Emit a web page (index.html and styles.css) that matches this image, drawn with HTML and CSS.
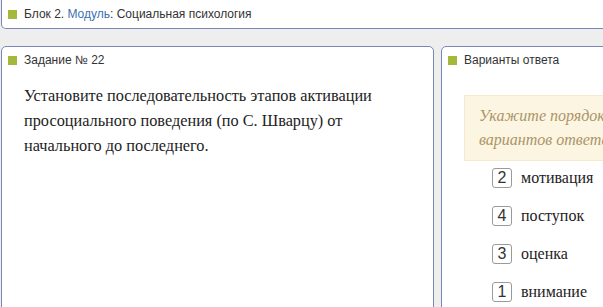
FILE: index.html
```html
<!DOCTYPE html>
<html lang="ru">
<head>
    <meta charset="UTF-8">
    <title>Задание № 22</title>
    <link rel="stylesheet" href="styles.css">
</head>
<body>
    <div class="topbar">
        <span class="mark"></span>
        <span>Блок 2. <a class="link">Модуль</a>: Социальная психология</span>
    </div>

    <div class="row">
        <div class="panel left">
            <div class="head"><span class="mark"></span>Задание № 22</div>
            <p class="question">Установите последовательность этапов активации просоциального поведения (по С. Шварцу) от начального до последнего.</p>
        </div>

        <div class="panel right">
            <div class="head"><span class="mark"></span>Варианты ответа</div>
            <div class="hint">Укажите порядок следования всех 4 вариантов ответа:</div>
            <ul class="answers">
                <li><span class="num">2</span>мотивация</li>
                <li><span class="num">4</span>поступок</li>
                <li><span class="num">3</span>оценка</li>
                <li><span class="num">1</span>внимание</li>
            </ul>
        </div>
    </div>
</body>
</html>
```

FILE: styles.css
```css
html {
    font-family: "Liberation Sans", Arial, sans-serif;
}

body {
    margin: 0;
    background-color: #eeeeee;
    overflow: hidden;
    width: 603px;
    height: 307px;
}

.mark {
    display: inline-block;
    width: 9px;
    height: 9px;
    background-color: #a3b93a;
    margin-right: 7px;
}

.topbar {
    display: flex;
    align-items: center;
    height: 28px;
    margin-left: 1px;
    margin-right: -20px;
    padding-left: 6px;
    background: white;
    border: 1px solid #7c86b6;
    border-top: none;
    border-radius: 0 0 5px 5px;
    font-size: 12px;
    color: #333;
}

.link {
    color: #3b72b0;
}

.row {
    display: flex;
    gap: 7px;
    margin-top: 17px;
    margin-left: 1px;
}

.panel {
    background: white;
    border: 1px solid #7c86b6;
    border-radius: 5px;
    height: 300px;
    flex-shrink: 0;
    box-sizing: border-box;
    padding: 6px 6px 0 6px;
}

.left {
    width: 433px;
}

.right {
    width: 480px;
}

.head {
    display: flex;
    align-items: center;
    font-size: 12px;
    color: #333;
    height: 14px;
}

.question {
    margin: 16px 0 0 16px;
    font-family: "Liberation Serif", "Times New Roman", serif;
    font-size: 16.3px;
    line-height: 25px;
    color: #222;
    width: 370px;
}

.hint {
    margin: 28px 0 0 16px;
    padding: 8px 14px 8px 14px;
    background: #fcf5e2;
    border: 1px solid #f3ead0;
    font-family: "Liberation Serif", "Times New Roman", serif;
    font-style: italic;
    font-size: 16px;
    line-height: 24px;
    color: #ab9468;
    width: 260px;
}

.answers {
    list-style: none;
    margin: -2px 0 0 44px;
    padding: 0;
}

.answers li {
    display: flex;
    align-items: center;
    height: 38px;
    font-family: "Liberation Serif", "Times New Roman", serif;
    font-size: 16px;
    color: #222;
}

.num {
    display: inline-flex;
    align-items: center;
    justify-content: center;
    width: 18px;
    height: 18px;
    border: 1px solid #9a9a9a;
    border-radius: 3px;
    margin-right: 9px;
    font-family: "Liberation Sans", Arial, sans-serif;
    font-size: 16px;
    color: #333;
}
```
